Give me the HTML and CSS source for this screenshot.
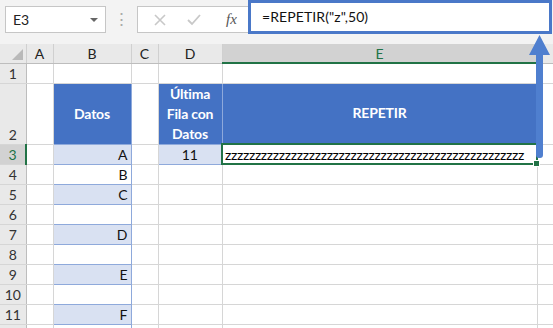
FILE: index.html
```html
<!DOCTYPE html>
<html lang="es">
<head>
  <meta charset="UTF-8" />
  <title>REPETIR</title>
  <link rel="stylesheet" href="styles.css">
</head>
<body>

  <div class="topbar">
    <div class="namebox">
      <span>E3</span>
      <span class="caret"></span>
    </div>
    <div class="dots">⋮</div>
    <div class="fbuttons">
      <svg class="ico" width="12" height="12" viewBox="0 0 12 12"><path d="M1 1 L11 11 M11 1 L1 11" stroke="#c8c8c8" stroke-width="1.6" fill="none"/></svg>
      <svg class="ico" width="14" height="12" viewBox="0 0 14 12"><path d="M1 6 L5 10 L13 1" stroke="#c8c8c8" stroke-width="1.8" fill="none"/></svg>
      <span class="fx">fx</span>
    </div>
    <div class="formula">=REPETIR("z",50)</div>
  </div>

  <table class="sheet">
    <colgroup>
      <col style="width:26px"><col style="width:27px"><col style="width:78px"><col style="width:27px"><col style="width:64px"><col style="width:315px"><col style="width:16px">
    </colgroup>
    <tr class="hdr">
      <td class="corner"><span class="tri"></span></td>
      <td>A</td><td>B</td><td>C</td><td>D</td><td class="sel">E</td><td></td>
    </tr>
    <tr class="r">
      <td class="rn">1</td><td></td><td></td><td></td><td></td><td></td><td></td>
    </tr>
    <tr class="r2">
      <td class="rn bottom">2</td><td></td>
      <td class="head">Datos</td><td></td>
      <td class="head">Última<br>Fila con<br>Datos</td>
      <td class="head">REPETIR</td><td></td>
    </tr>
    <tr class="r">
      <td class="rn rsel">3</td><td></td><td class="dat fill">A</td><td></td>
      <td class="dat fill mid">11</td>
      <td class="active"><span class="zs">zzzzzzzzzzzzzzzzzzzzzzzzzzzzzzzzzzzzzzzzzzzzzzzzzz</span><span class="handle"></span></td><td></td>
    </tr>
    <tr class="r"><td class="rn">4</td><td></td><td class="dat">B</td><td></td><td></td><td></td><td></td></tr>
    <tr class="r"><td class="rn">5</td><td></td><td class="dat fill">C</td><td></td><td></td><td></td><td></td></tr>
    <tr class="r"><td class="rn">6</td><td></td><td class="dat"></td><td></td><td></td><td></td><td></td></tr>
    <tr class="r"><td class="rn">7</td><td></td><td class="dat fill">D</td><td></td><td></td><td></td><td></td></tr>
    <tr class="r"><td class="rn">8</td><td></td><td class="dat"></td><td></td><td></td><td></td><td></td></tr>
    <tr class="r"><td class="rn">9</td><td></td><td class="dat fill">E</td><td></td><td></td><td></td><td></td></tr>
    <tr class="r"><td class="rn">10</td><td></td><td class="dat"></td><td></td><td></td><td></td><td></td></tr>
    <tr class="r"><td class="rn">11</td><td></td><td class="dat fill">F</td><td></td><td></td><td></td><td></td></tr>
    <tr class="r"><td class="rn"></td><td></td><td class="dat"></td><td></td><td></td><td></td><td></td></tr>
  </table>

  <svg class="arrow" width="24" height="126" viewBox="0 0 24 126">
    <path d="M10.5 0 L21 20 L14 20 L14 120 Q14 123 11 123 L10 123 Q7 123 7 120 L7 20 L0 20 Z" fill="#4f7fcf"/>
  </svg>

</body>
</html>
```

FILE: styles.css
```css
body {
  margin: 0;
  font-family: Lato, "Open Sans", sans-serif;
  background: #fff;
  width: 553px;
  height: 328px;
  overflow: hidden;
  position: relative;
}

.topbar {
  display: flex;
  align-items: flex-start;
  height: 44px;
  background: #f3f3f3;
  box-sizing: border-box;
}
.namebox {
  display: flex; align-items: center; justify-content: space-between;
  box-sizing: border-box;
  margin: 6px 0 0 5px;
  width: 101px; height: 27px;
  padding: 0 7px 0 7px;
  background: #fff;
  border: 1px solid #c6c6c6;
  font-size: 14px; color: #222;
}
.caret {
  width: 0; height: 0;
  border-left: 4px solid transparent;
  border-right: 4px solid transparent;
  border-top: 4px solid #666;
}
.dots {
  width: 31px; margin-top: 8px;
  text-align: center; color: #aaa; font-size: 17px;
}
.fbuttons {
  display: flex; align-items: center;
  box-sizing: border-box;
  margin-top: 6px;
  width: 111px; height: 27px;
  padding-left: 16px;
  background: #fff;
  border: 1px solid #c6c6c6;
  border-right: none;
}
.fbuttons .ico { margin-right: 21px; }
.fbuttons .ico + .ico { margin-right: 25px; }
.fx {
  font-family: "Liberation Serif", serif;
  font-style: italic; font-size: 15px; color: #555;
}
.formula {
  box-sizing: border-box;
  width: 304px; height: 34px;
  padding: 5px 0 0 11px;
  background: #fff;
  border: 3px solid #4a78c8;
  font-size: 14px; color: #111;
  letter-spacing: 0.1px;
}

.sheet {
  border-collapse: collapse;
  table-layout: fixed;
  width: 553px;
  font-size: 14px;
}
.sheet td {
  border-right: 1px solid #d6d6d6;
  border-bottom: 1px solid #d6d6d6;
  padding: 0 3px;
  white-space: nowrap;
  overflow: visible;
}
.hdr { height: 19px; }
.hdr td {
  background: #e9e9e9;
  border-right: 1px solid #d0d0d0;
  border-bottom: 1px solid #bdbdbd;
  text-align: center;
  color: #222;
  font-size: 14px;
}
.hdr td.sel {
  background: #d2d2d2;
  color: #217346;
  border-bottom: 2px solid #217346;
}
.corner { position: relative; }
.tri {
  position: absolute; right: 3px; bottom: 3px;
  width: 0; height: 0;
  border-left: 11px solid transparent;
  border-bottom: 11px solid #b9b9b9;
}
.r { height: 20px; }
.r2 { height: 60px; }
.rn {
  background: #e9e9e9;
  text-align: center;
  color: #333;
  border-right-color: #bdbdbd !important;
}
.rn.bottom { vertical-align: bottom; padding-bottom: 1px; }
.rn.rsel {
  background: #d2d2d2;
  color: #217346;
  border-right: 2px solid #217346 !important;
}
.head {
  background: #4472c4;
  color: #fff;
  font-weight: bold;
  text-align: center;
  line-height: 20px;
  letter-spacing: -0.2px;
  border: 1px solid #8ea9db !important;
}
.dat {
  text-align: right;
  color: #111;
  border: 1px solid #8ea9db !important;
}
.fill { background: #d9e1f2; }
.mid { text-align: center; }
.active {
  position: relative;
  border: 2px solid #217346 !important;
  padding-left: 2px !important;
}
.zs { letter-spacing: -0.35px; font-size: 14px; }
.handle {
  position: absolute; right: -4px; bottom: -4px;
  width: 5px; height: 5px;
  background: #217346;
  border: 1px solid #fff;
}

.arrow {
  position: absolute;
  left: 529px; top: 35px;
}
```
